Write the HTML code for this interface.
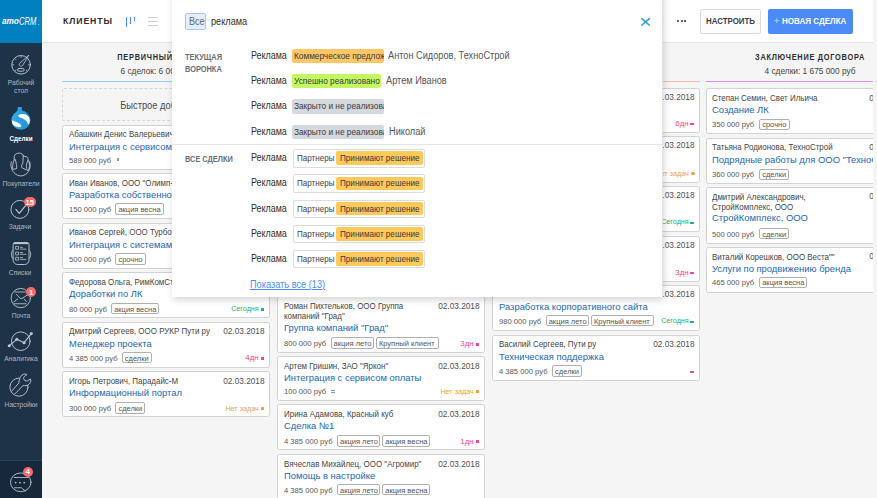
<!DOCTYPE html>
<html lang="ru"><head><meta charset="utf-8"><title>amoCRM</title>
<style>
html,body{margin:0;padding:0}
body{width:877px;height:498px;overflow:hidden;background:#f5f5f5;position:relative;font-family:"Liberation Sans",sans-serif}
.t{position:absolute;white-space:nowrap;line-height:1;display:block}
.b{position:absolute;box-sizing:border-box}
.clip{position:absolute;overflow:hidden}
.card{position:absolute;box-sizing:border-box;background:#fff;border:1px solid #d3d3d3;border-radius:2.5px;overflow:hidden}
.tag{position:absolute;box-sizing:border-box;border:1px solid #b0b0b0;border-radius:2px;background:#fff}
svg{position:absolute;overflow:visible}
</style></head><body>

<div class="clip" id="main" style="left:42px;top:0;width:830.8px;height:498px;background:#f5f5f5">
<div class="b" style="left:0.00px;top:0.00px;width:831.00px;height:42.60px;background:#fff;border-bottom:1px solid #e3e3e3"></div>
<span class="t" style="top:16.00px;font-size:9.5px;color:#2b2b2b;font-weight:bold;letter-spacing:1.0px;left:21.00px;transform-origin:0 0;transform:scaleX(0.915);">КЛИЕНТЫ</span>
<div class="b" style="left:84.00px;top:17.00px;width:1.00px;height:10.00px;background:#4c8bf5"></div>
<div class="b" style="left:88.00px;top:17.00px;width:1.00px;height:7.00px;background:#4c8bf5"></div>
<div class="b" style="left:92.00px;top:17.00px;width:1.00px;height:3.50px;background:#4c8bf5"></div>
<div class="b" style="left:106.00px;top:16.80px;width:10.20px;height:1.00px;background:#cfcfcf"></div>
<div class="b" style="left:106.00px;top:20.80px;width:10.20px;height:1.00px;background:#cfcfcf"></div>
<div class="b" style="left:106.00px;top:24.80px;width:10.20px;height:1.00px;background:#cfcfcf"></div>
<div class="b" style="left:635.30px;top:20.00px;width:1.80px;height:1.80px;background:#2e2e2e;border-radius:1px"></div>
<div class="b" style="left:638.80px;top:20.00px;width:1.80px;height:1.80px;background:#2e2e2e;border-radius:1px"></div>
<div class="b" style="left:642.30px;top:20.00px;width:1.80px;height:1.80px;background:#2e2e2e;border-radius:1px"></div>
<div class="b" style="left:657.80px;top:9.00px;width:61.40px;height:24.80px;background:#fcfcfc;border:1px solid #dcdcdc;border-radius:2px"></div>
<span class="t" style="top:17.00px;font-size:9px;color:#3a3f47;font-weight:bold;left:663.50px;transform-origin:0 0;transform:scaleX(0.877);">НАСТРОИТЬ</span>
<div class="b" style="left:726.20px;top:9.00px;width:84.60px;height:24.80px;background:#4c8bf7;border-radius:2px"></div>
<span class="t" style="top:17.00px;font-size:9px;color:#a9c8fb;font-weight:bold;left:732.00px;transform-origin:0 0;">+</span>
<span class="t" style="top:17.00px;font-size:9px;color:#fff;font-weight:bold;left:740.40px;transform-origin:0 0;transform:scaleX(0.893);">НОВАЯ СДЕЛКА</span>
<span class="t" style="top:53.00px;font-size:9px;color:#2e2e2e;font-weight:bold;letter-spacing:0.9px;left:123.80px;transform-origin:50% 0;transform:translateX(-50%) scaleX(0.818);">ПЕРВИЧНЫЙ КОНТАКТ</span>
<span class="t" style="top:67.00px;font-size:9px;color:#444;left:123.80px;transform-origin:50% 0;transform:translateX(-50%) scaleX(0.925);">6 сделок: 6 004 000 руб</span>
<span class="t" style="top:53.00px;font-size:9px;color:#2e2e2e;font-weight:bold;letter-spacing:0.9px;left:338.90px;transform-origin:50% 0;transform:translateX(-50%) scaleX(0.818);">ПЕРЕГОВОРЫ</span>
<span class="t" style="top:67.00px;font-size:9px;color:#444;left:338.90px;transform-origin:50% 0;transform:translateX(-50%) scaleX(0.925);">9 сделок: 12 520 000 руб</span>
<span class="t" style="top:53.00px;font-size:9px;color:#2e2e2e;font-weight:bold;letter-spacing:0.9px;left:554.20px;transform-origin:50% 0;transform:translateX(-50%) scaleX(0.818);">ПРИНИМАЮТ РЕШЕНИЕ</span>
<span class="t" style="top:67.00px;font-size:9px;color:#444;left:554.20px;transform-origin:50% 0;transform:translateX(-50%) scaleX(0.925);">6 сделок: 8 030 000 руб</span>
<span class="t" style="top:53.00px;font-size:9px;color:#2e2e2e;font-weight:bold;letter-spacing:0.9px;left:768.20px;transform-origin:50% 0;transform:translateX(-50%) scaleX(0.818);">ЗАКЛЮЧЕНИЕ ДОГОВОРА</span>
<span class="t" style="top:67.00px;font-size:9px;color:#444;left:768.20px;transform-origin:50% 0;transform:translateX(-50%) scaleX(0.925);">4 сделки: 1 675 000 руб</span>
<div class="b" style="left:20.20px;top:80.80px;width:207.20px;height:1.40px;background:#99ccff"></div>
<div class="b" style="left:235.40px;top:80.80px;width:207.20px;height:1.40px;background:#ffe082"></div>
<div class="b" style="left:450.50px;top:80.80px;width:207.20px;height:1.40px;background:#ffb5b0"></div>
<div class="b" style="left:664.00px;top:80.80px;width:217.20px;height:1.40px;background:#de8cff"></div>
<div class="b" style="left:19.70px;top:88.00px;width:208.20px;height:33.00px;border:1px dashed #d6d6d6;border-radius:2px"></div>
<span class="t" style="top:101.00px;font-size:10px;color:#4a4a4a;left:123.80px;transform-origin:50% 0;transform:translateX(-50%) scaleX(0.93);">Быстрое добавление</span>
<div class="card" style="left:19.70px;top:125.00px;width:208.20px;height:44.60px">
<span class="t" style="top:4.00px;font-size:9px;color:#454545;left:5.90px;transform-origin:0 0;transform:scaleX(0.885);">Абашкин Денис Валерьевич</span>
<span class="t" style="top:3.00px;font-size:9.5px;color:#505050;right:4.80px;transform-origin:100% 0;transform:scaleX(0.87);">02.03.2018</span>
<span class="t" style="top:16.00px;font-size:9.5px;color:#2367b3;left:5.90px;transform-origin:0 0;transform:scaleX(0.99);">Интеграция с сервисом оплаты</span>
<span class="t" style="top:31.00px;font-size:8px;color:#585858;left:5.90px;transform-origin:0 0;transform:scaleX(0.955);">589 000 руб</span>
<div class="b" style="left:53.91px;top:32.40px;width:2.4px;height:3px;background:#9a9a9a"></div>
<div class="b" style="right:4.70px;top:33.30px;width:3px;height:3px;background:#f0478b;border-radius:.5px"></div>
<span class="t" style="top:30.00px;font-size:7.5px;color:#f0478b;right:10.10px;transform-origin:100% 0;transform:scaleX(1.05);">2дн</span>
</div>
<div class="card" style="left:19.70px;top:173.00px;width:208.20px;height:45.80px">
<span class="t" style="top:5.00px;font-size:9px;color:#454545;left:5.90px;transform-origin:0 0;transform:scaleX(0.885);">Иван Иванов, ООО &quot;Олимп-Строй&quot;</span>
<span class="t" style="top:3.00px;font-size:9.5px;color:#505050;right:4.80px;transform-origin:100% 0;transform:scaleX(0.87);">02.03.2018</span>
<span class="t" style="top:16.00px;font-size:9.5px;color:#2367b3;left:5.90px;transform-origin:0 0;transform:scaleX(0.99);">Разработка собственного портала</span>
<span class="t" style="top:32.00px;font-size:8px;color:#585858;left:5.90px;transform-origin:0 0;transform:scaleX(0.955);">150 000 руб</span>
<div class="tag" style="left:52.61px;top:29.40px;width:48.30px;height:11.3px"></div>
<span class="t" style="top:32.00px;font-size:7.5px;color:#555;left:55.71px;transform-origin:0 0;">акция весна</span>
<div class="b" style="right:4.70px;top:34.50px;width:3px;height:3px;background:#27ae73;border-radius:.5px"></div>
<span class="t" style="top:32.00px;font-size:7.5px;color:#27ae73;right:10.10px;transform-origin:100% 0;transform:scaleX(0.96);">Сегодня</span>
</div>
<div class="card" style="left:19.70px;top:223.00px;width:208.20px;height:45.80px">
<span class="t" style="top:4.00px;font-size:9px;color:#454545;left:5.90px;transform-origin:0 0;transform:scaleX(0.885);">Иванов Сергей, ООО ТурбоСтрой</span>
<span class="t" style="top:3.00px;font-size:9.5px;color:#505050;right:4.80px;transform-origin:100% 0;transform:scaleX(0.87);">02.03.2018</span>
<span class="t" style="top:16.00px;font-size:9.5px;color:#2367b3;left:5.90px;transform-origin:0 0;transform:scaleX(0.99);">Интеграция с системами учета</span>
<span class="t" style="top:32.00px;font-size:8px;color:#585858;left:5.90px;transform-origin:0 0;transform:scaleX(0.955);">500 000 руб</span>
<div class="tag" style="left:52.61px;top:29.40px;width:30.40px;height:11.3px"></div>
<span class="t" style="top:32.00px;font-size:7.5px;color:#555;left:55.71px;transform-origin:0 0;">срочно</span>
<div class="b" style="right:4.70px;top:34.50px;width:3px;height:3px;background:#f0478b;border-radius:.5px"></div>
<span class="t" style="top:32.00px;font-size:7.5px;color:#f0478b;right:10.10px;transform-origin:100% 0;transform:scaleX(1.05);">1дн</span>
</div>
<div class="card" style="left:19.70px;top:271.90px;width:208.20px;height:45.90px">
<span class="t" style="top:5.10px;font-size:9px;color:#454545;left:5.90px;transform-origin:0 0;transform:scaleX(0.885);">Федорова Ольга, РимКомСтрой</span>
<span class="t" style="top:4.10px;font-size:9.5px;color:#505050;right:4.80px;transform-origin:100% 0;transform:scaleX(0.87);">02.03.2018</span>
<span class="t" style="top:16.10px;font-size:9.5px;color:#2367b3;left:5.90px;transform-origin:0 0;transform:scaleX(0.99);">Доработки по ЛК</span>
<span class="t" style="top:33.10px;font-size:8px;color:#585858;left:5.90px;transform-origin:0 0;transform:scaleX(0.955);">80 000 руб</span>
<div class="tag" style="left:48.36px;top:30.30px;width:48.30px;height:11.3px"></div>
<span class="t" style="top:33.10px;font-size:7.5px;color:#555;left:51.46px;transform-origin:0 0;">акция весна</span>
<div class="b" style="right:4.70px;top:35.40px;width:3px;height:3px;background:#27ae73;border-radius:.5px"></div>
<span class="t" style="top:32.10px;font-size:7.5px;color:#27ae73;right:10.10px;transform-origin:100% 0;transform:scaleX(0.96);">Сегодня</span>
</div>
<div class="card" style="left:19.70px;top:321.90px;width:208.20px;height:45.90px">
<span class="t" style="top:4.10px;font-size:9px;color:#454545;left:5.90px;transform-origin:0 0;transform:scaleX(0.885);">Дмитрий Сергеев, ООО РУКР Пути ру</span>
<span class="t" style="top:3.10px;font-size:9.5px;color:#505050;right:4.80px;transform-origin:100% 0;transform:scaleX(0.87);">02.03.2018</span>
<span class="t" style="top:16.10px;font-size:9.5px;color:#2367b3;left:5.90px;transform-origin:0 0;transform:scaleX(0.99);">Менеджер проекта</span>
<span class="t" style="top:32.10px;font-size:8px;color:#585858;left:5.90px;transform-origin:0 0;transform:scaleX(0.955);">4 385 000 руб</span>
<div class="tag" style="left:58.98px;top:29.30px;width:29.90px;height:11.3px"></div>
<span class="t" style="top:32.10px;font-size:7.5px;color:#555;left:62.08px;transform-origin:0 0;">сделки</span>
<div class="b" style="right:4.70px;top:34.40px;width:3px;height:3px;background:#f0478b;border-radius:.5px"></div>
<span class="t" style="top:31.10px;font-size:7.5px;color:#f0478b;right:10.10px;transform-origin:100% 0;transform:scaleX(1.05);">4дн</span>
</div>
<div class="card" style="left:19.70px;top:370.90px;width:208.20px;height:46.60px">
<span class="t" style="top:5.10px;font-size:9px;color:#454545;left:5.90px;transform-origin:0 0;transform:scaleX(0.885);">Игорь Петрович, Парадайс-М</span>
<span class="t" style="top:4.10px;font-size:9.5px;color:#505050;right:4.80px;transform-origin:100% 0;transform:scaleX(0.87);">02.03.2018</span>
<span class="t" style="top:16.10px;font-size:9.5px;color:#2367b3;left:5.90px;transform-origin:0 0;transform:scaleX(0.99);">Информационный портал</span>
<span class="t" style="top:33.10px;font-size:8px;color:#585858;left:5.90px;transform-origin:0 0;transform:scaleX(0.955);">300 000 руб</span>
<div class="tag" style="left:52.61px;top:30.40px;width:29.90px;height:11.3px"></div>
<span class="t" style="top:33.10px;font-size:7.5px;color:#555;left:55.71px;transform-origin:0 0;">сделки</span>
<div class="b" style="right:4.70px;top:35.50px;width:3px;height:3px;background:#e9a53c;border-radius:.5px"></div>
<span class="t" style="top:33.10px;font-size:7.5px;color:#e9a53c;right:10.10px;transform-origin:100% 0;transform:scaleX(0.96);">Нет задач</span>
</div>
<div class="card" style="left:234.90px;top:87.90px;width:208.20px;height:45.60px">
<span class="t" style="top:4.10px;font-size:9px;color:#454545;left:5.90px;transform-origin:0 0;transform:scaleX(0.885);">Олег Кузнецов, ООО Вектор</span>
<span class="t" style="top:3.10px;font-size:9.5px;color:#505050;right:4.80px;transform-origin:100% 0;transform:scaleX(0.87);">02.03.2018</span>
<span class="t" style="top:16.10px;font-size:9.5px;color:#2367b3;left:5.90px;transform-origin:0 0;transform:scaleX(0.99);">Поставка оборудования</span>
<span class="t" style="top:32.10px;font-size:8px;color:#585858;left:5.90px;transform-origin:0 0;transform:scaleX(0.955);">720 000 руб</span>
<div class="tag" style="left:52.61px;top:29.20px;width:30.40px;height:11.3px"></div>
<span class="t" style="top:32.10px;font-size:7.5px;color:#555;left:55.71px;transform-origin:0 0;">срочно</span>
<div class="b" style="right:4.70px;top:34.30px;width:3px;height:3px;background:#f0478b;border-radius:.5px"></div>
<span class="t" style="top:31.10px;font-size:7.5px;color:#f0478b;right:10.10px;transform-origin:100% 0;transform:scaleX(1.05);">2дн</span>
</div>
<div class="card" style="left:234.90px;top:136.90px;width:208.20px;height:45.60px">
<span class="t" style="top:4.10px;font-size:9px;color:#454545;left:5.90px;transform-origin:0 0;transform:scaleX(0.885);">Мария Белова, ИП Белова</span>
<span class="t" style="top:3.10px;font-size:9.5px;color:#505050;right:4.80px;transform-origin:100% 0;transform:scaleX(0.87);">02.03.2018</span>
<span class="t" style="top:16.10px;font-size:9.5px;color:#2367b3;left:5.90px;transform-origin:0 0;transform:scaleX(0.99);">Настройка телефонии</span>
<span class="t" style="top:32.10px;font-size:8px;color:#585858;left:5.90px;transform-origin:0 0;transform:scaleX(0.955);">95 000 руб</span>
<div class="tag" style="left:48.36px;top:29.20px;width:29.90px;height:11.3px"></div>
<span class="t" style="top:32.10px;font-size:7.5px;color:#555;left:51.46px;transform-origin:0 0;">сделки</span>
<div class="b" style="right:4.70px;top:34.30px;width:3px;height:3px;background:#27ae73;border-radius:.5px"></div>
<span class="t" style="top:31.10px;font-size:7.5px;color:#27ae73;right:10.10px;transform-origin:100% 0;transform:scaleX(0.96);">Сегодня</span>
</div>
<div class="card" style="left:234.90px;top:185.90px;width:208.20px;height:45.60px">
<span class="t" style="top:4.10px;font-size:9px;color:#454545;left:5.90px;transform-origin:0 0;transform:scaleX(0.885);">Павел Орлов, ЗАО Север</span>
<span class="t" style="top:3.10px;font-size:9.5px;color:#505050;right:4.80px;transform-origin:100% 0;transform:scaleX(0.87);">02.03.2018</span>
<span class="t" style="top:16.10px;font-size:9.5px;color:#2367b3;left:5.90px;transform-origin:0 0;transform:scaleX(0.99);">Аудит продаж</span>
<span class="t" style="top:32.10px;font-size:8px;color:#585858;left:5.90px;transform-origin:0 0;transform:scaleX(0.955);">1 200 000 руб</span>
<div class="tag" style="left:58.98px;top:29.20px;width:43.60px;height:11.3px"></div>
<span class="t" style="top:32.10px;font-size:7.5px;color:#555;left:62.08px;transform-origin:0 0;">акция лето</span>
<div class="b" style="right:4.70px;top:34.30px;width:3px;height:3px;background:#e9a53c;border-radius:.5px"></div>
<span class="t" style="top:31.10px;font-size:7.5px;color:#e9a53c;right:10.10px;transform-origin:100% 0;transform:scaleX(0.96);">Нет задач</span>
</div>
<div class="card" style="left:234.90px;top:234.90px;width:208.20px;height:45.60px">
<span class="t" style="top:4.10px;font-size:9px;color:#454545;left:5.90px;transform-origin:0 0;transform:scaleX(0.885);">Анна Крылова, Медиа Плюс</span>
<span class="t" style="top:3.10px;font-size:9.5px;color:#505050;right:4.80px;transform-origin:100% 0;transform:scaleX(0.87);">02.03.2018</span>
<span class="t" style="top:16.10px;font-size:9.5px;color:#2367b3;left:5.90px;transform-origin:0 0;transform:scaleX(0.99);">Рекламная кампания</span>
<span class="t" style="top:32.10px;font-size:8px;color:#585858;left:5.90px;transform-origin:0 0;transform:scaleX(0.955);">640 000 руб</span>
<div class="tag" style="left:52.61px;top:29.20px;width:48.30px;height:11.3px"></div>
<span class="t" style="top:32.10px;font-size:7.5px;color:#555;left:55.71px;transform-origin:0 0;">акция весна</span>
<div class="b" style="right:4.70px;top:34.30px;width:3px;height:3px;background:#f0478b;border-radius:.5px"></div>
<span class="t" style="top:31.10px;font-size:7.5px;color:#f0478b;right:10.10px;transform-origin:100% 0;transform:scaleX(1.05);">3дн</span>
</div>
<div class="card" style="left:234.90px;top:296.10px;width:208.20px;height:56.60px">
<span class="t" style="top:4.90px;font-size:9px;color:#454545;left:5.90px;transform-origin:0 0;transform:scaleX(0.885);">Роман Пихтельков, ООО Группа</span>
<span class="t" style="top:14.90px;font-size:9px;color:#454545;left:5.90px;transform-origin:0 0;transform:scaleX(0.885);">компаний &quot;Град&quot;</span>
<span class="t" style="top:3.90px;font-size:9.5px;color:#505050;right:4.80px;transform-origin:100% 0;transform:scaleX(0.87);">02.03.2018</span>
<span class="t" style="top:25.90px;font-size:9.5px;color:#2367b3;left:5.90px;transform-origin:0 0;transform:scaleX(0.99);">Группа компаний &quot;Град&quot;</span>
<span class="t" style="top:42.90px;font-size:8px;color:#585858;left:5.90px;transform-origin:0 0;transform:scaleX(0.955);">800 000 руб</span>
<div class="tag" style="left:52.61px;top:40.40px;width:43.60px;height:11.3px"></div>
<span class="t" style="top:42.90px;font-size:7.5px;color:#555;left:55.71px;transform-origin:0 0;">акция лето</span>
<div class="tag" style="left:97.91px;top:40.40px;width:62.90px;height:11.3px"></div>
<span class="t" style="top:42.90px;font-size:7.5px;color:#555;left:101.01px;transform-origin:0 0;">Крупный клиент</span>
<div class="b" style="right:4.70px;top:45.50px;width:3px;height:3px;background:#f0478b;border-radius:.5px"></div>
<span class="t" style="top:42.90px;font-size:7.5px;color:#f0478b;right:10.10px;transform-origin:100% 0;transform:scaleX(1.05);">3дн</span>
</div>
<div class="card" style="left:234.90px;top:355.90px;width:208.20px;height:44.80px">
<span class="t" style="top:5.10px;font-size:9px;color:#454545;left:5.90px;transform-origin:0 0;transform:scaleX(0.885);">Артем Гришин, ЗАО &quot;Яркон&quot;</span>
<span class="t" style="top:4.10px;font-size:9.5px;color:#505050;right:4.80px;transform-origin:100% 0;transform:scaleX(0.87);">02.03.2018</span>
<span class="t" style="top:16.10px;font-size:9.5px;color:#2367b3;left:5.90px;transform-origin:0 0;transform:scaleX(0.99);">Интеграция с сервисом оплаты</span>
<span class="t" style="top:31.10px;font-size:8px;color:#585858;left:5.90px;transform-origin:0 0;transform:scaleX(0.955);">100 000 руб</span>
<div class="b" style="left:53.21px;top:32.90px;width:3.6px;height:3px;border-top:1px solid #9a9a9a;border-bottom:1px solid #9a9a9a"></div>
<div class="b" style="right:4.70px;top:33.50px;width:3px;height:3px;background:#e9a53c;border-radius:.5px"></div>
<span class="t" style="top:31.10px;font-size:7.5px;color:#e9a53c;right:10.10px;transform-origin:100% 0;transform:scaleX(0.96);">Нет задач</span>
</div>
<div class="card" style="left:234.90px;top:403.90px;width:208.20px;height:46.60px">
<span class="t" style="top:5.10px;font-size:9px;color:#454545;left:5.90px;transform-origin:0 0;transform:scaleX(0.885);">Ирина Адамова, Красный куб</span>
<span class="t" style="top:4.10px;font-size:9.5px;color:#505050;right:4.80px;transform-origin:100% 0;transform:scaleX(0.87);">02.03.2018</span>
<span class="t" style="top:16.10px;font-size:9.5px;color:#2367b3;left:5.90px;transform-origin:0 0;transform:scaleX(0.99);">Сделка №1</span>
<span class="t" style="top:33.10px;font-size:8px;color:#585858;left:5.90px;transform-origin:0 0;transform:scaleX(0.955);">4 385 000 руб</span>
<div class="tag" style="left:58.98px;top:30.40px;width:43.60px;height:11.3px"></div>
<span class="t" style="top:33.10px;font-size:7.5px;color:#555;left:62.08px;transform-origin:0 0;">акция лето</span>
<div class="tag" style="left:104.28px;top:30.40px;width:48.30px;height:11.3px"></div>
<span class="t" style="top:33.10px;font-size:7.5px;color:#555;left:107.38px;transform-origin:0 0;">акция весна</span>
<div class="b" style="right:4.70px;top:35.50px;width:3px;height:3px;background:#f0478b;border-radius:.5px"></div>
<span class="t" style="top:33.10px;font-size:7.5px;color:#f0478b;right:10.10px;transform-origin:100% 0;transform:scaleX(1.05);">1дн</span>
</div>
<div class="card" style="left:234.90px;top:453.90px;width:208.20px;height:46.20px">
<span class="t" style="top:5.10px;font-size:9px;color:#454545;left:5.90px;transform-origin:0 0;transform:scaleX(0.885);">Вячеслав Михайлец, ООО &quot;Агромир&quot;</span>
<span class="t" style="top:4.10px;font-size:9.5px;color:#505050;right:4.80px;transform-origin:100% 0;transform:scaleX(0.87);">02.03.2018</span>
<span class="t" style="top:16.10px;font-size:9.5px;color:#2367b3;left:5.90px;transform-origin:0 0;transform:scaleX(0.99);">Помощь в настройке</span>
<span class="t" style="top:32.10px;font-size:8px;color:#585858;left:5.90px;transform-origin:0 0;transform:scaleX(0.955);">4 385 000 руб</span>
<div class="tag" style="left:58.98px;top:29.30px;width:43.60px;height:11.3px"></div>
<span class="t" style="top:32.10px;font-size:7.5px;color:#555;left:62.08px;transform-origin:0 0;">акция лето</span>
<div class="tag" style="left:104.28px;top:29.30px;width:48.30px;height:11.3px"></div>
<span class="t" style="top:32.10px;font-size:7.5px;color:#555;left:107.38px;transform-origin:0 0;">акция весна</span>
</div>
<div class="card" style="left:450.00px;top:87.90px;width:208.20px;height:44.90px">
<span class="t" style="top:4.10px;font-size:9px;color:#454545;left:5.90px;transform-origin:0 0;transform:scaleX(0.885);">Николай Рогов, ООО Профиль</span>
<span class="t" style="top:3.10px;font-size:9.5px;color:#505050;right:4.80px;transform-origin:100% 0;transform:scaleX(0.87);">02.03.2018</span>
<span class="t" style="top:16.10px;font-size:9.5px;color:#2367b3;left:5.90px;transform-origin:0 0;transform:scaleX(0.99);">Разработка мобильного приложения</span>
<span class="t" style="top:31.10px;font-size:8px;color:#585858;left:5.90px;transform-origin:0 0;transform:scaleX(0.955);">1 450 000 руб</span>
<div class="tag" style="left:58.98px;top:28.50px;width:30.40px;height:11.3px"></div>
<span class="t" style="top:31.10px;font-size:7.5px;color:#555;left:62.08px;transform-origin:0 0;">срочно</span>
<div class="b" style="right:4.90px;top:34.00px;width:4.2px;height:2.2px;background:#f0478b;border-radius:.5px"></div>
<span class="t" style="top:31.10px;font-size:7.5px;color:#f0478b;right:10.10px;transform-origin:100% 0;transform:scaleX(1.05);">6дн</span>
</div>
<div class="card" style="left:450.00px;top:136.20px;width:208.20px;height:46.50px">
<span class="t" style="top:4.80px;font-size:9px;color:#454545;left:5.90px;transform-origin:0 0;transform:scaleX(0.885);">Елена Соколова, СтройИнвест</span>
<span class="t" style="top:2.80px;font-size:9.5px;color:#505050;right:4.80px;transform-origin:100% 0;transform:scaleX(0.87);">02.03.2018</span>
<span class="t" style="top:15.80px;font-size:9.5px;color:#2367b3;left:5.90px;transform-origin:0 0;transform:scaleX(0.99);">Внедрение CRM</span>
<span class="t" style="top:32.80px;font-size:8px;color:#585858;left:5.90px;transform-origin:0 0;transform:scaleX(0.955);">820 000 руб</span>
<div class="tag" style="left:52.61px;top:30.10px;width:29.90px;height:11.3px"></div>
<span class="t" style="top:32.80px;font-size:7.5px;color:#555;left:55.71px;transform-origin:0 0;">сделки</span>
<div class="b" style="right:4.10px;top:34.40px;width:3.8px;height:3.8px;background:#e9a53c;border-radius:2px"></div>
<span class="t" style="top:32.80px;font-size:7.5px;color:#e9a53c;right:10.10px;transform-origin:100% 0;transform:scaleX(0.96);">Нет задач</span>
</div>
<div class="card" style="left:450.00px;top:185.60px;width:208.20px;height:46.00px">
<span class="t" style="top:5.40px;font-size:9px;color:#454545;left:5.90px;transform-origin:0 0;transform:scaleX(0.885);">Сергей Волков, АО Гранит</span>
<span class="t" style="top:3.40px;font-size:9.5px;color:#505050;right:4.80px;transform-origin:100% 0;transform:scaleX(0.87);">02.03.2018</span>
<span class="t" style="top:16.40px;font-size:9.5px;color:#2367b3;left:5.90px;transform-origin:0 0;transform:scaleX(0.99);">Поддержка сайта</span>
<span class="t" style="top:32.40px;font-size:8px;color:#585858;left:5.90px;transform-origin:0 0;transform:scaleX(0.955);">260 000 руб</span>
<div class="tag" style="left:52.61px;top:29.60px;width:43.60px;height:11.3px"></div>
<span class="t" style="top:32.40px;font-size:7.5px;color:#555;left:55.71px;transform-origin:0 0;">акция лето</span>
<div class="b" style="right:4.90px;top:35.10px;width:4.2px;height:2.2px;background:#27ae73;border-radius:.5px"></div>
<span class="t" style="top:31.40px;font-size:7.5px;color:#27ae73;right:10.10px;transform-origin:100% 0;transform:scaleX(0.96);">Сегодня</span>
</div>
<div class="card" style="left:450.00px;top:235.80px;width:208.20px;height:46.30px">
<span class="t" style="top:4.20px;font-size:9px;color:#454545;left:5.90px;transform-origin:0 0;transform:scaleX(0.885);">Ольга Зайцева, ООО Лотос</span>
<span class="t" style="top:3.20px;font-size:9.5px;color:#505050;right:4.80px;transform-origin:100% 0;transform:scaleX(0.87);">02.03.2018</span>
<span class="t" style="top:16.20px;font-size:9.5px;color:#2367b3;left:5.90px;transform-origin:0 0;transform:scaleX(0.99);">Продвижение в соцсетях</span>
<span class="t" style="top:32.20px;font-size:8px;color:#585858;left:5.90px;transform-origin:0 0;transform:scaleX(0.955);">135 000 руб</span>
<div class="tag" style="left:52.61px;top:29.90px;width:48.30px;height:11.3px"></div>
<span class="t" style="top:32.20px;font-size:7.5px;color:#555;left:55.71px;transform-origin:0 0;">акция весна</span>
<div class="b" style="right:4.90px;top:35.40px;width:4.2px;height:2.2px;background:#f0478b;border-radius:.5px"></div>
<span class="t" style="top:32.20px;font-size:7.5px;color:#f0478b;right:10.10px;transform-origin:100% 0;transform:scaleX(1.05);">3дн</span>
</div>
<div class="card" style="left:450.00px;top:284.90px;width:208.20px;height:45.80px">
<span class="t" style="top:3.10px;font-size:9.5px;color:#505050;right:4.80px;transform-origin:100% 0;transform:scaleX(0.87);">02.03.2018</span>
<span class="t" style="top:16.10px;font-size:9.5px;color:#2367b3;left:5.90px;transform-origin:0 0;transform:scaleX(0.99);">Разработка корпоративного сайта</span>
<span class="t" style="top:32.10px;font-size:8px;color:#585858;left:5.90px;transform-origin:0 0;transform:scaleX(0.955);">980 000 руб</span>
<div class="tag" style="left:52.61px;top:29.30px;width:43.60px;height:11.3px"></div>
<span class="t" style="top:32.10px;font-size:7.5px;color:#555;left:55.71px;transform-origin:0 0;">акция лето</span>
<div class="tag" style="left:97.91px;top:29.30px;width:62.90px;height:11.3px"></div>
<span class="t" style="top:32.10px;font-size:7.5px;color:#555;left:101.01px;transform-origin:0 0;">Крупный клиент</span>
<div class="b" style="right:4.90px;top:34.80px;width:4.2px;height:2.2px;background:#27ae73;border-radius:.5px"></div>
<span class="t" style="top:31.10px;font-size:7.5px;color:#27ae73;right:10.10px;transform-origin:100% 0;transform:scaleX(0.96);">Сегодня</span>
</div>
<div class="card" style="left:450.00px;top:334.80px;width:208.20px;height:46.00px">
<span class="t" style="top:4.20px;font-size:9px;color:#454545;left:5.90px;transform-origin:0 0;transform:scaleX(0.885);">Василий Сергеев, Пути ру</span>
<span class="t" style="top:3.20px;font-size:9.5px;color:#505050;right:4.80px;transform-origin:100% 0;transform:scaleX(0.87);">02.03.2018</span>
<span class="t" style="top:16.20px;font-size:9.5px;color:#2367b3;left:5.90px;transform-origin:0 0;transform:scaleX(0.99);">Техническая поддержка</span>
<span class="t" style="top:32.20px;font-size:8px;color:#585858;left:5.90px;transform-origin:0 0;transform:scaleX(0.955);">4 385 000 руб</span>
<div class="tag" style="left:58.98px;top:29.50px;width:29.90px;height:11.3px"></div>
<span class="t" style="top:32.20px;font-size:7.5px;color:#555;left:62.08px;transform-origin:0 0;">сделки</span>
<div class="b" style="right:4.90px;top:35.00px;width:4.2px;height:2.2px;background:#f0478b;border-radius:.5px"></div>
</div>
<div class="card" style="left:663.50px;top:87.90px;width:211.20px;height:46.30px">
<span class="t" style="top:5.10px;font-size:9px;color:#454545;left:5.90px;transform-origin:0 0;transform:scaleX(0.885);">Степан Семин, Свет Ильича</span>
<span class="t" style="top:4.10px;font-size:9.5px;color:#505050;right:4.80px;transform-origin:100% 0;transform:scaleX(0.87);">02.03.2018</span>
<span class="t" style="top:16.10px;font-size:9.5px;color:#2367b3;left:5.90px;transform-origin:0 0;transform:scaleX(0.99);">Создание ЛК</span>
<span class="t" style="top:32.10px;font-size:8px;color:#585858;left:5.90px;transform-origin:0 0;transform:scaleX(0.955);">350 000 руб</span>
<div class="tag" style="left:52.61px;top:29.70px;width:30.40px;height:11.3px"></div>
<span class="t" style="top:32.10px;font-size:7.5px;color:#555;left:55.71px;transform-origin:0 0;">срочно</span>
</div>
<div class="card" style="left:663.50px;top:137.60px;width:211.20px;height:46.20px">
<span class="t" style="top:4.40px;font-size:9px;color:#454545;left:5.90px;transform-origin:0 0;transform:scaleX(0.885);">Татьяна Родионова, ТехноСтрой</span>
<span class="t" style="top:3.40px;font-size:9.5px;color:#505050;right:4.80px;transform-origin:100% 0;transform:scaleX(0.87);">02.03.2018</span>
<span class="t" style="top:16.40px;font-size:9.5px;color:#2367b3;left:5.90px;transform-origin:0 0;transform:scaleX(0.99);">Подрядные работы для ООО &quot;ТехноСтрой&quot;</span>
<span class="t" style="top:32.40px;font-size:8px;color:#585858;left:5.90px;transform-origin:0 0;transform:scaleX(0.955);">360 000 руб</span>
<div class="tag" style="left:52.61px;top:30.10px;width:29.90px;height:11.3px"></div>
<span class="t" style="top:32.40px;font-size:7.5px;color:#555;left:55.71px;transform-origin:0 0;">сделки</span>
</div>
<div class="card" style="left:663.50px;top:186.70px;width:211.20px;height:56.90px">
<span class="t" style="top:5.30px;font-size:9px;color:#454545;left:5.90px;transform-origin:0 0;transform:scaleX(0.885);">Дмитрий Александрович,</span>
<span class="t" style="top:15.30px;font-size:9px;color:#454545;left:5.90px;transform-origin:0 0;transform:scaleX(0.885);">СтройКомплекс, ООО</span>
<span class="t" style="top:3.30px;font-size:9.5px;color:#505050;right:4.80px;transform-origin:100% 0;transform:scaleX(0.87);">02.03.2018</span>
<span class="t" style="top:25.30px;font-size:9.5px;color:#2367b3;left:5.90px;transform-origin:0 0;transform:scaleX(0.99);">СтройКомплекс, ООО</span>
<span class="t" style="top:43.30px;font-size:8px;color:#585858;left:5.90px;transform-origin:0 0;transform:scaleX(0.955);">500 000 руб</span>
<div class="tag" style="left:52.61px;top:40.40px;width:29.90px;height:11.3px"></div>
<span class="t" style="top:43.30px;font-size:7.5px;color:#555;left:55.71px;transform-origin:0 0;">сделки</span>
</div>
<div class="card" style="left:663.50px;top:246.90px;width:211.20px;height:46.00px">
<span class="t" style="top:5.10px;font-size:9px;color:#454545;left:5.90px;transform-origin:0 0;transform:scaleX(0.885);">Виталий Корешков, ООО Веста&quot;&quot;</span>
<span class="t" style="top:3.10px;font-size:9.5px;color:#505050;right:4.80px;transform-origin:100% 0;transform:scaleX(0.87);">02.03.2018</span>
<span class="t" style="top:16.10px;font-size:9.5px;color:#2367b3;left:5.90px;transform-origin:0 0;transform:scaleX(0.99);">Услуги по продвижению бренда</span>
<span class="t" style="top:31.10px;font-size:8px;color:#585858;left:5.90px;transform-origin:0 0;transform:scaleX(0.955);">465 000 руб</span>
<div class="tag" style="left:52.61px;top:29.00px;width:48.30px;height:11.3px"></div>
<span class="t" style="top:31.10px;font-size:7.5px;color:#555;left:55.71px;transform-origin:0 0;">акция весна</span>
</div>
<div class="b" style="left:129.80px;top:-10px;width:491.50px;height:307px;background:#fff;box-shadow:1px 3px 7px rgba(0,0,0,.17);border-right:1px solid #e2e2e2">
<div class="b" style="left:13.20px;top:23.00px;width:21.20px;height:17.20px;background:#e6eefb;border:1px solid #a8c8f4;border-radius:2px"></div>
<span class="t" style="top:26.00px;font-size:10.5px;color:#5b6878;left:16.80px;transform-origin:0 0;transform:scaleX(0.86);">Все</span>
<span class="t" style="top:26.00px;font-size:11px;color:#2e2e2e;left:39.00px;transform-origin:0 0;transform:scaleX(0.832);">реклама</span>
<svg style="left:469.10px;top:27.50px" width="9.2" height="7.8" viewBox="0 0 9.2 7.8"><path d="M0.4 0.3 L8.8 7.5 M8.8 0.3 L0.4 7.5" stroke="#2d9bd8" stroke-width="1.6" fill="none"/></svg>
<span class="t" style="top:63.00px;font-size:8.5px;color:#6c6f74;font-weight:bold;left:13.70px;transform-origin:0 0;transform:scaleX(0.871);">ТЕКУЩАЯ</span>
<span class="t" style="top:75.00px;font-size:8.5px;color:#6c6f74;font-weight:bold;left:13.70px;transform-origin:0 0;transform:scaleX(0.871);">ВОРОНКА</span>
<span class="t" style="top:61.00px;font-size:10px;color:#2e2e2e;left:78.90px;transform-origin:0 0;transform:scaleX(0.892);">Реклама</span>
<div class="b" style="left:120.20px;top:59.00px;width:92px;height:14.3px;background:#ffc766;border-radius:2px;overflow:hidden">
<span class="t" style="top:2.00px;font-size:9.5px;color:#3a3a3a;left:2.50px;transform-origin:0 0;transform:scaleX(0.872);">Коммерческое предложение</span>
</div>
<span class="t" style="top:61.00px;font-size:10px;color:#555;left:216.60px;transform-origin:0 0;transform:scaleX(0.92);">Антон Сидоров, ТехноСтрой</span>
<span class="t" style="top:86.00px;font-size:10px;color:#2e2e2e;left:78.90px;transform-origin:0 0;transform:scaleX(0.892);">Реклама</span>
<div class="b" style="left:120.20px;top:84.20px;width:89px;height:14.3px;background:#c4f862;border-radius:2px;overflow:hidden">
<span class="t" style="top:1.80px;font-size:9.5px;color:#3a3a3a;left:2.50px;transform-origin:0 0;transform:scaleX(0.872);">Успешно реализовано</span>
</div>
<span class="t" style="top:86.00px;font-size:10px;color:#555;left:214.20px;transform-origin:0 0;transform:scaleX(0.92);">Артем Иванов</span>
<span class="t" style="top:111.00px;font-size:10px;color:#2e2e2e;left:78.90px;transform-origin:0 0;transform:scaleX(0.892);">Реклама</span>
<div class="b" style="left:120.20px;top:109.40px;width:92px;height:14.3px;background:#d5d8dc;border-radius:2px;overflow:hidden">
<span class="t" style="top:1.60px;font-size:9.5px;color:#3a3a3a;left:2.50px;transform-origin:0 0;transform:scaleX(0.872);">Закрыто и не реализовано</span>
</div>
<span class="t" style="top:137.00px;font-size:10px;color:#2e2e2e;left:78.90px;transform-origin:0 0;transform:scaleX(0.892);">Реклама</span>
<div class="b" style="left:120.20px;top:134.60px;width:92px;height:14.3px;background:#d5d8dc;border-radius:2px;overflow:hidden">
<span class="t" style="top:2.40px;font-size:9.5px;color:#3a3a3a;left:2.50px;transform-origin:0 0;transform:scaleX(0.872);">Закрыто и не реализовано</span>
</div>
<span class="t" style="top:137.00px;font-size:10px;color:#555;left:217.20px;transform-origin:0 0;transform:scaleX(0.92);">Николай</span>
<div class="b" style="left:0.00px;top:154.00px;width:491.50px;height:1.00px;background:#e6e6e6"></div>
<span class="t" style="top:165.00px;font-size:8.5px;color:#6c6f74;font-weight:bold;left:13.70px;transform-origin:0 0;transform:scaleX(0.869);">ВСЕ СДЕЛКИ</span>
<span class="t" style="top:163.00px;font-size:10px;color:#2e2e2e;left:78.90px;transform-origin:0 0;transform:scaleX(0.892);">Реклама</span>
<div class="b" style="left:120.80px;top:159.10px;width:132.80px;height:18.50px;background:#fff;border:1px solid #dcdcdc;border-radius:2px"></div>
<div class="b" style="left:164.40px;top:161.40px;width:86.80px;height:13.60px;background:#ffc95c;border-radius:2px"></div>
<span class="t" style="top:163.00px;font-size:9.5px;color:#444;left:124.90px;transform-origin:0 0;transform:scaleX(0.849);">Партнеры</span>
<span class="t" style="top:163.00px;font-size:9.5px;color:#3a3a3a;left:168.00px;transform-origin:0 0;transform:scaleX(0.854);">Принимают решение</span>
<span class="t" style="top:188.00px;font-size:10px;color:#2e2e2e;left:78.90px;transform-origin:0 0;transform:scaleX(0.892);">Реклама</span>
<div class="b" style="left:120.80px;top:184.30px;width:132.80px;height:18.50px;background:#fff;border:1px solid #dcdcdc;border-radius:2px"></div>
<div class="b" style="left:164.40px;top:186.60px;width:86.80px;height:13.60px;background:#ffc95c;border-radius:2px"></div>
<span class="t" style="top:188.00px;font-size:9.5px;color:#444;left:124.90px;transform-origin:0 0;transform:scaleX(0.849);">Партнеры</span>
<span class="t" style="top:188.00px;font-size:9.5px;color:#3a3a3a;left:168.00px;transform-origin:0 0;transform:scaleX(0.854);">Принимают решение</span>
<span class="t" style="top:214.00px;font-size:10px;color:#2e2e2e;left:78.90px;transform-origin:0 0;transform:scaleX(0.892);">Реклама</span>
<div class="b" style="left:120.80px;top:209.50px;width:132.80px;height:18.50px;background:#fff;border:1px solid #dcdcdc;border-radius:2px"></div>
<div class="b" style="left:164.40px;top:211.80px;width:86.80px;height:13.60px;background:#ffc95c;border-radius:2px"></div>
<span class="t" style="top:214.00px;font-size:9.5px;color:#444;left:124.90px;transform-origin:0 0;transform:scaleX(0.849);">Партнеры</span>
<span class="t" style="top:214.00px;font-size:9.5px;color:#3a3a3a;left:168.00px;transform-origin:0 0;transform:scaleX(0.854);">Принимают решение</span>
<span class="t" style="top:239.00px;font-size:10px;color:#2e2e2e;left:78.90px;transform-origin:0 0;transform:scaleX(0.892);">Реклама</span>
<div class="b" style="left:120.80px;top:234.70px;width:132.80px;height:18.50px;background:#fff;border:1px solid #dcdcdc;border-radius:2px"></div>
<div class="b" style="left:164.40px;top:237.00px;width:86.80px;height:13.60px;background:#ffc95c;border-radius:2px"></div>
<span class="t" style="top:239.00px;font-size:9.5px;color:#444;left:124.90px;transform-origin:0 0;transform:scaleX(0.849);">Партнеры</span>
<span class="t" style="top:239.00px;font-size:9.5px;color:#3a3a3a;left:168.00px;transform-origin:0 0;transform:scaleX(0.854);">Принимают решение</span>
<span class="t" style="top:264.00px;font-size:10px;color:#2e2e2e;left:78.90px;transform-origin:0 0;transform:scaleX(0.892);">Реклама</span>
<div class="b" style="left:120.80px;top:259.90px;width:132.80px;height:18.50px;background:#fff;border:1px solid #dcdcdc;border-radius:2px"></div>
<div class="b" style="left:164.40px;top:262.20px;width:86.80px;height:13.60px;background:#ffc95c;border-radius:2px"></div>
<span class="t" style="top:264.00px;font-size:9.5px;color:#444;left:124.90px;transform-origin:0 0;transform:scaleX(0.849);">Партнеры</span>
<span class="t" style="top:264.00px;font-size:9.5px;color:#3a3a3a;left:168.00px;transform-origin:0 0;transform:scaleX(0.854);">Принимают решение</span>
<span class="t" style="top:290.00px;font-size:10px;color:#4c8bf5;left:78.70px;transform-origin:0 0;transform:scaleX(0.92);text-decoration:underline;">Показать все (13)</span>
</div>
</div>
<div class="clip" style="left:0;top:0;width:42px;height:498px;background:#1e3347">
<div class="b" style="left:0.00px;top:0.00px;width:42.00px;height:42.80px;background:#0080c0"></div>
<span class="t" style="top:16.00px;font-size:9.5px;color:#fff;font-weight:bold;font-style:italic;left:1.80px;transform-origin:0 0;transform:scaleX(0.86);">amo</span>
<span class="t" style="top:17.00px;font-size:10px;color:#fff;font-style:italic;left:19.20px;transform-origin:0 0;transform:scaleX(0.76);">CRM</span>
<span class="t" style="top:19.00px;font-size:7px;color:#fff;left:37.60px;transform-origin:0 0;">.</span>
<div class="b" style="left:0.00px;top:460.40px;width:42.00px;height:38.00px;background:#16283a;border-top:1px solid #22465f"></div>
<span class="t" style="top:79.00px;font-size:7px;color:#adb8c3;left:21.00px;transform-origin:50% 0;transform:translateX(-50%) scaleX(0.96);">Рабочий</span>
<span class="t" style="top:87.00px;font-size:7px;color:#adb8c3;left:20.60px;transform-origin:50% 0;transform:translateX(-50%) scaleX(0.96);">стол</span>
<span class="t" style="top:135.00px;font-size:7px;color:#fff;font-weight:bold;left:20.80px;transform-origin:50% 0;transform:translateX(-50%) scaleX(0.9);">Сделки</span>
<span class="t" style="top:180.00px;font-size:7px;color:#adb8c3;left:20.60px;transform-origin:50% 0;transform:translateX(-50%) scaleX(0.98);">Покупатели</span>
<span class="t" style="top:223.00px;font-size:7px;color:#adb8c3;left:20.40px;transform-origin:50% 0;transform:translateX(-50%) scaleX(0.96);">Задачи</span>
<span class="t" style="top:269.00px;font-size:7px;color:#adb8c3;left:20.40px;transform-origin:50% 0;transform:translateX(-50%) scaleX(0.96);">Списки</span>
<span class="t" style="top:312.00px;font-size:7px;color:#adb8c3;left:20.80px;transform-origin:50% 0;transform:translateX(-50%) scaleX(0.96);">Почта</span>
<span class="t" style="top:355.00px;font-size:7px;color:#adb8c3;left:20.60px;transform-origin:50% 0;transform:translateX(-50%) scaleX(0.96);">Аналитика</span>
<span class="t" style="top:401.00px;font-size:7px;color:#adb8c3;left:20.60px;transform-origin:50% 0;transform:translateX(-50%) scaleX(0.96);">Настройки</span>
<svg style="left:0;top:0" width="42" height="498" viewBox="0 0 42 498" fill="none" stroke="#bcc6cf" stroke-width="0.95" stroke-linecap="round" stroke-linejoin="round"><circle cx="21.1" cy="64.8" r="9.3"/>
<g stroke-width="0.8"><path d="M12.6 64.8 h1.1 M29.6 64.8 h-1.1 M21.1 56.3 v1.1 M15.1 58.8 l0.8 0.8 M27.1 70.8 l-0.8 -0.8 M15.1 70.8 l0.8 -0.8"/></g>
<path d="M28.6 55.4 L19.6 63.4 C18.9 64.3 19.2 65.6 20.2 66.1 C21.1 66.6 22.0 66.3 22.5 65.6 Z" stroke-width="0.85"/>
<rect x="17.5" y="68.5" width="6.6" height="2.7" rx="1.35"/><defs><linearGradient id="bg1" x1="0" y1="0" x2="1" y2="0"><stop offset="0" stop-color="#33aee6"/><stop offset="1" stop-color="#1e8fd2"/></linearGradient></defs><g transform="translate(9 105) scale(0.05216)" stroke-width="18.21"><g stroke="none"><rect x="166" y="38" width="80" height="90" rx="10" fill="#2aa3e0"/>
<path d="M120 150 C140 120 160 112 166 100 L246 100 C262 112 300 118 330 150 Z" fill="#2aa3e0"/>
<circle cx="230" cy="292" r="182" fill="url(#bg1)"/>
<path d="M172 208 C200 165 300 160 345 195 C385 225 412 270 394 335 C387 360 374 372 362 378 C365 330 330 290 270 262 C230 243 190 240 172 208 Z" fill="#fff"/>
<path d="M55 290 C90 300 140 320 185 345 C225 368 245 395 232 418 C200 430 140 428 95 395 C70 372 55 335 55 290 Z" fill="#fff"/></g></g><g transform="translate(6 148) scale(0.06423)" stroke-width="14.01"><path d="M82 215 C55 300 110 425 225 435 C335 435 400 325 370 215"/>
<path d="M128 185 L128 130 C135 95 170 80 205 80 C245 80 270 100 272 125"/>
<path d="M128 185 C105 230 100 290 105 332 L165 322 C170 290 160 230 145 180"/>
<path d="M272 125 L330 140 C345 150 345 180 345 190 C375 240 375 300 345 352 L255 312 C235 295 240 270 262 235 L268 125"/>
<path d="M345 190 C320 230 310 280 322 318"/></g><circle cx="19.9" cy="209.4" r="9.0"/><path d="M15.9 209.4 L19.3 213.3 L25.9 205.1" stroke-width="1.15"/><path d="M15.1 242.5 h11.9 a2 2 0 0 1 2 2 v15.6 a4.4 4.4 0 0 1 -4.4 4.4 h-7.1 a4.4 4.4 0 0 1 -4.4 -4.4 v-15.6 a2 2 0 0 1 2 -2 z"/>
<path d="M14.0 243.4 h14.1" stroke-width="1.5" stroke-linecap="butt"/>
<path d="M13.1 250 c-2.4 0.6 -2.4 7.9 0 8.5 M29 250 c2.4 0.6 2.4 7.9 0 8.5" stroke-width="0.85"/>
<g stroke-width="0.8"><rect x="16.0" y="246.4" width="2.6" height="2.8"/><path d="M20.3 247.3 h2.3 M20.3 249.1 h5.6"/>
<rect x="16.0" y="252.1" width="2.6" height="2.8"/><path d="M20.3 252.5 h2.3 M20.3 254.3 h5.6"/>
<rect x="16.0" y="257.3" width="2.6" height="2.8"/><path d="M20.3 257.6 h2.3 M20.3 259.4 h5.6"/></g><g transform="translate(6 283) scale(0.06024)" stroke-width="14.94"><circle cx="245" cy="250" r="160"/>
<path d="M150 150 H330 M140 345 H335" stroke-width="17" stroke-opacity=".85"/>
<path d="M175 190 L250 265 L345 205 M130 315 L195 265 M300 265 L340 310"/></g><circle cx="20.8" cy="341.2" r="9.3"/>
<path d="M9.3 345.7 L16.8 339.3 L24.1 342.7 L31.3 333.6" stroke-width="1.1"/>
<g fill="#bcc6cf" stroke="none"><circle cx="9.3" cy="345.7" r="1.55"/><circle cx="16.8" cy="339.3" r="1.55"/><circle cx="24.1" cy="342.7" r="1.55"/><circle cx="31.3" cy="333.6" r="1.55"/></g><g transform="translate(6 370) scale(0.06024)" stroke-width="15.77"><circle cx="215" cy="285" r="150"/>
<path d="M90 355 L215 215 C215 170 225 120 265 85 C295 62 330 62 348 78 C320 95 290 110 292 140 C295 170 330 190 360 180 C375 172 390 160 405 150 C420 165 410 210 385 235 C355 262 310 262 280 260 L150 395" fill="#1e3347"/></g><g transform="translate(6 464) scale(0.06423)" stroke-width="14.01"><ellipse cx="230" cy="285" rx="160" ry="146"/>
<path d="M130 210 H350 M130 370 H240 L300 420" stroke-width="13"/>
<g fill="#bcc6cf" stroke="none"><rect x="138" y="279" width="24" height="22"/><rect x="204" y="279" width="24" height="22"/><rect x="272" y="279" width="24" height="22"/></g></g></svg>
<div class="b" style="left:23.80px;top:196.90px;width:11.80px;height:10.20px;background:#f56a6a;border-radius:5.1px"></div>
<span class="t" style="top:199.00px;font-size:7.5px;color:#fff;font-weight:bold;left:29.70px;transform-origin:0 0;transform:translateX(-50%);">15</span>
<div class="b" style="left:25.90px;top:286.90px;width:10.20px;height:10.20px;background:#f56a6a;border-radius:5.1px"></div>
<span class="t" style="top:289.00px;font-size:7.5px;color:#fff;font-weight:bold;left:31.00px;transform-origin:0 0;transform:translateX(-50%);">1</span>
<div class="b" style="left:22.70px;top:466.60px;width:10.20px;height:10.20px;background:#f56a6a;border-radius:5.1px"></div>
<span class="t" style="top:468.00px;font-size:7.5px;color:#fff;font-weight:bold;left:27.80px;transform-origin:0 0;transform:translateX(-50%);">4</span>
</div>
</body></html>
